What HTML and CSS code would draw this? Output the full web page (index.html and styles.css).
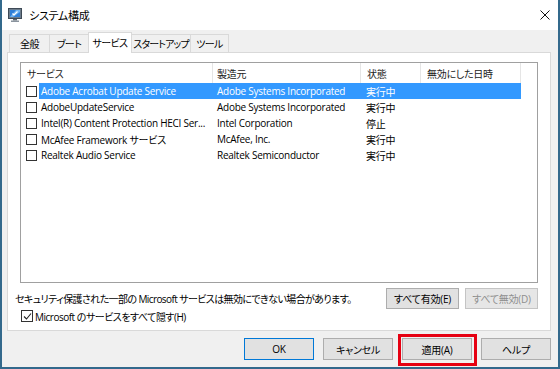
FILE: index.html
```html
<!DOCTYPE html>
<html lang="ja">
<head>
  <meta charset="UTF-8">
  <title>システム構成</title>
  <link rel="stylesheet" href="styles.css">
</head>
<body>
  <div class="window">

    <div class="titlebar">
      <svg class="app-icon" width="14" height="14" viewBox="0 0 14 14">
        <rect x="0.5" y="0.5" width="13" height="10" fill="#6d7d8c" stroke="#3e4a56"/>
        <rect x="2" y="2" width="10" height="7" fill="#2f7fd8"/>
        <path d="M2 9 L8 2 H12 V4 L5 9 Z" fill="#6fb3f2"/>
        <path d="M4.5 5.5 L6 7 L9.5 3.5" fill="none" stroke="#fff" stroke-width="1.2"/>
        <rect x="5" y="11" width="4" height="1.5" fill="#5c6670"/>
        <rect x="3" y="12.5" width="8" height="1.5" fill="#8a949e"/>
      </svg>
      <span class="title">システム構成</span>
      <svg class="close" width="10" height="10" viewBox="0 0 10 10">
        <path d="M0.5 0.5 L9.5 9.5 M9.5 0.5 L0.5 9.5" stroke="#111" stroke-width="1"/>
      </svg>
    </div>

    <div class="client">
      <div class="tabs">
        <div class="tab t-general">全般</div>
        <div class="tab t-boot">ブート</div>
        <div class="tab t-services active">サービス</div>
        <div class="tab t-startup">スタートアップ</div>
        <div class="tab t-tools">ツール</div>
      </div>

      <div class="panel">
        <div class="listbox">
          <div class="list-head">
            <div class="h h1">サービス</div>
            <div class="h h2">製造元</div>
            <div class="h h3">状態</div>
            <div class="h h4">無効にした日時</div>
          </div>

          <div class="row selected">
            <span class="cb"></span>
            <div class="cells">
              <div class="c c1">Adobe Acrobat Update Service</div>
              <div class="c c2">Adobe Systems Incorporated</div>
              <div class="c c3">実行中</div>
              <div class="c c4"></div>
            </div>
          </div>
          <div class="row">
            <span class="cb"></span>
            <div class="cells">
              <div class="c c1">AdobeUpdateService</div>
              <div class="c c2">Adobe Systems Incorporated</div>
              <div class="c c3">実行中</div>
              <div class="c c4"></div>
            </div>
          </div>
          <div class="row">
            <span class="cb"></span>
            <div class="cells">
              <div class="c c1">Intel(R) Content Protection HECI Ser...</div>
              <div class="c c2">Intel Corporation</div>
              <div class="c c3">停止</div>
              <div class="c c4"></div>
            </div>
          </div>
          <div class="row">
            <span class="cb"></span>
            <div class="cells">
              <div class="c c1">McAfee Framework サービス</div>
              <div class="c c2">McAfee, Inc.</div>
              <div class="c c3">実行中</div>
              <div class="c c4"></div>
            </div>
          </div>
          <div class="row">
            <span class="cb"></span>
            <div class="cells">
              <div class="c c1">Realtek Audio Service</div>
              <div class="c c2">Realtek Semiconductor</div>
              <div class="c c3">実行中</div>
              <div class="c c4"></div>
            </div>
          </div>
        </div>

        <div class="note-row">
          <span class="note">セキュリティ保護された一部の Microsoft サービスは無効にできない場合があります。</span>
          <button class="btn small">すべて有効(E)</button>
          <button class="btn small" disabled>すべて無効(D)</button>
        </div>

        <div class="hide-row">
          <span class="cb checked">
            <svg width="9" height="9" viewBox="0 0 9 9"><path d="M1 4.5 L3.5 7 L8 1.5" fill="none" stroke="#222" stroke-width="1.1"/></svg>
          </span>
          <span class="hide-label">Microsoft のサービスをすべて隠す(H)</span>
        </div>
      </div>

      <div class="footer">
        <button class="btn default">OK</button>
        <button class="btn">キャンセル</button>
        <button class="btn marked">適用(A)</button>
        <button class="btn">ヘルプ</button>
      </div>
    </div>

  </div>
</body>
</html>
```

FILE: styles.css
```css
* { margin: 0; padding: 0; box-sizing: border-box; }
body { font-family: "Open Sans", "Noto Sans CJK JP", sans-serif; font-size: 10px; letter-spacing: -0.25px; font-feature-settings: "palt"; color: #000; background: #fff; }

.window { width: 560px; height: 369px; border: 2px solid #33698c; border-top: none; display: flex; flex-direction: column; background: #f0f0f0; }
.titlebar { height: 30px; background: #fff; display: flex; align-items: center; padding: 0 7px 0 6px; }
.app-icon { margin-right: 7px; margin-top: -1px; }
.title { font-size: 11px; flex: 1; }
.close { margin-right: 1px; }

.client { flex: 1; padding: 0 7px 0 5px; display: flex; flex-direction: column; }

.tabs { display: flex; align-items: flex-end; padding: 2px 0 0 2px; margin-bottom: -1px; position: relative; z-index: 1; }
.tab { height: 18px; margin-bottom: 1px; margin-left: -1px; border: 1px solid #d9d9d9; border-bottom: none; background: #f0f0f0; display: flex; align-items: center; justify-content: center; white-space: nowrap; letter-spacing: -0.6px; }
.tab:first-child { margin-left: 0; }
.tab.active { height: 21px; margin-bottom: 0; background: #fff; position: relative; z-index: 2; padding-bottom: 2px; }
.t-general { width: 41px; }
.t-boot { width: 40px; }
.t-services { width: 44px; }
.t-startup { width: 60px; letter-spacing: -0.9px; }
.t-tools { width: 39px; }

.panel { height: 279px; background: #fff; border: 1px solid #d9d9d9; padding: 9px 12px 0 7px; display: flex; flex-direction: column; }

.listbox { height: 221px; margin-left: 5px; border: 1px solid #a0a0a0; background: #fff; }
.list-head { display: flex; height: 20px; }
.h { border-right: 1px solid #e5e5e5; display: flex; align-items: center; color: #222; white-space: nowrap; }
.h1 { width: 192px; padding-left: 6px; }
.h2 { width: 148px; padding-left: 4px; }
.h3 { width: 60px; padding-left: 6px; }
.h4 { width: 100px; padding-left: 6px; }

.row { display: flex; align-items: center; height: 16px; padding-left: 5px; }
.cb { width: 11px; height: 11px; border: 1px solid #333; background: #fff; flex-shrink: 0; display: flex; align-items: center; justify-content: center; }
.cells { display: flex; height: 16px; align-items: center; margin-left: 2px; }
.c { white-space: nowrap; overflow: hidden; }
.c1 { width: 174px; padding-left: 2px; }
.c2 { width: 148px; padding-left: 4px; }
.c3 { width: 60px; padding-left: 5px; }
.c4 { width: 100px; }
.row.selected .cells { background: #3399ff; color: #fff; }

.note-row { display: flex; align-items: center; gap: 6px; margin-top: 5px; height: 21px; }
.note { flex: 1; white-space: nowrap; letter-spacing: -0.6px; }

.hide-row { display: flex; align-items: center; gap: 2px; height: 14px; margin-left: 6px; }
.hide-row .cb { width: 12px; height: 12px; }
.hide-label { letter-spacing: -0.5px; }

.btn { font-family: inherit; font-size: 10px; letter-spacing: -0.25px; font-feature-settings: "palt"; color: #000; background: #e1e1e1; border: 1px solid #adadad; height: 22px; width: 70px; white-space: nowrap; }
.btn.small { width: 73px; height: 21px; }
.btn:disabled { background: #e6e6e6; border-color: #c4c4c4; color: #8e8e8e; }
.btn.default { border-color: #0078d7; }
.btn.marked { position: relative; }
.btn.marked::after { content: ""; position: absolute; top: -5px; left: -5px; right: -6px; bottom: -7px; border: 3px solid #e60012; }

.footer { display: flex; justify-content: flex-end; gap: 9px; padding-top: 7px; }
```
